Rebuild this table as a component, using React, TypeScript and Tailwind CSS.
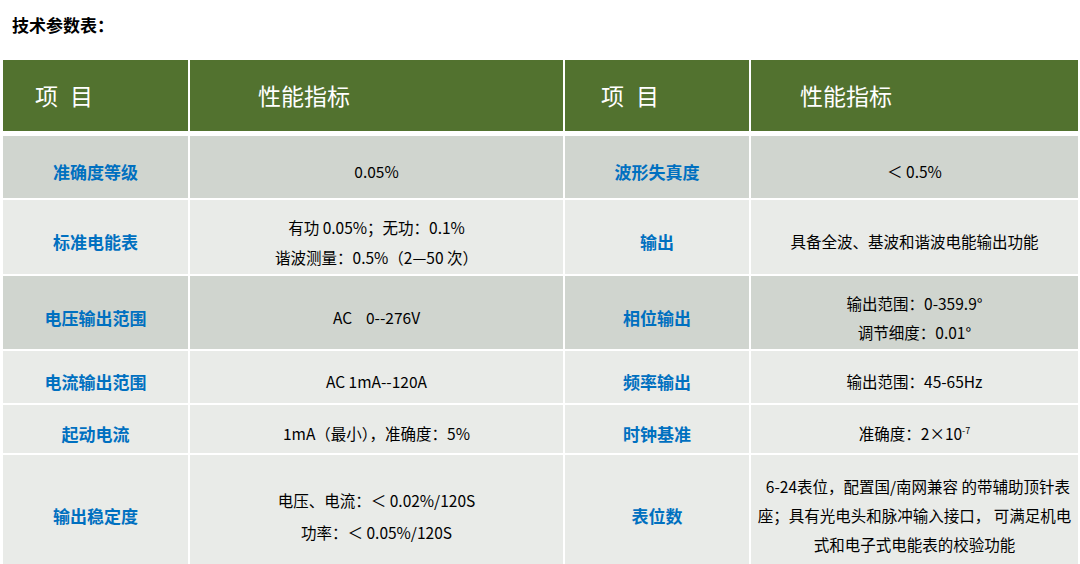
import React from "react";

type Row = {
  h: string;
  bg: string;
  label1: string;
  value1: React.ReactNode;
  label2: string;
  value2: React.ReactNode;
};

const dark = "bg-[#d0d5cf]";
const light = "bg-[#e9ebe8]";

const rows: Row[] = [
  {
    h: "h-[62px]",
    bg: dark,
    label1: "准确度等级",
    value1: "0.05%",
    label2: "波形失真度",
    value2: "＜ 0.5%",
  },
  {
    h: "h-[74px]",
    bg: light,
    label1: "标准电能表",
    value1: (
      <div className="leading-[30px]">
        <div>有功 0.05%；无功：0.1%</div>
        <div>谐波测量：0.5%（2—50 次）</div>
      </div>
    ),
    label2: "输出",
    value2: "具备全波、基波和谐波电能输出功能",
  },
  {
    h: "h-[73px]",
    bg: dark,
    label1: "电压输出范围",
    value1: <span className="whitespace-pre">AC    0--276V</span>,
    label2: "相位输出",
    value2: (
      <div className="leading-[29px]">
        <div>输出范围：0-359.9°</div>
        <div>调节细度：0.01°</div>
      </div>
    ),
  },
  {
    h: "h-[52px]",
    bg: light,
    label1: "电流输出范围",
    value1: <span className="whitespace-pre">AC 1mA--120A</span>,
    label2: "频率输出",
    value2: "输出范围：45-65Hz",
  },
  {
    h: "h-[48px]",
    bg: light,
    label1: "起动电流",
    value1: "1mA（最小），准确度：5%",
    label2: "时钟基准",
    value2: (
      <span>
        准确度：2×10<sup className="text-[9px] -top-[6px]">-7</sup>
      </span>
    ),
  },
  {
    h: "h-[111px]",
    bg: light,
    label1: "输出稳定度",
    value1: (
      <div className="leading-[32px]">
        <div>电压、电流：＜ 0.02%/120S</div>
        <div>功率：＜ 0.05%/120S</div>
      </div>
    ),
    label2: "表位数",
    value2: (
      <div className="leading-[29px] whitespace-pre">
        <div>{"  6-24表位，配置国/南网兼容 的带辅助顶针表"}</div>
        <div>座；具有光电头和脉冲输入接口， 可满足机电</div>
        <div>式和电子式电能表的校验功能</div>
      </div>
    ),
  },
];

const cols = "grid grid-cols-[185px_373px_184px_327px] gap-x-[2px]";

function Label({ text }: { text: string }) {
  return (
    <div className="flex items-center justify-center pt-[10px] text-[17px] font-bold text-[#0070c0]">
      {text}
    </div>
  );
}

function Value({ children }: { children: React.ReactNode }) {
  return (
    <div className="flex items-center justify-center pt-[10px] text-center text-[15.5px] text-black">
      {children}
    </div>
  );
}

export default function App() {
  return (
    <div className="min-h-[564px] bg-white font-['Noto_Sans_CJK_SC',sans-serif] text-black">
      <div className="pl-[12px] pt-[15px] text-[17px] font-bold leading-[20px]">技术参数表：</div>

      <div className="ml-[3px] mt-[25px] w-[1075px]">
        {/* header */}
        <div className={`${cols} h-[71px] bg-white text-[23px] text-white`}>
          <div className="flex items-center bg-[#52722f] pl-[32px]">
            <span>项</span>
            <span className="ml-[12px]">目</span>
          </div>
          <div className="flex items-center bg-[#52722f] pl-[68px]">性能指标</div>
          <div className="flex items-center bg-[#52722f] pl-[36px]">
            <span>项</span>
            <span className="ml-[12px]">目</span>
          </div>
          <div className="flex items-center bg-[#52722f] pl-[49px]">性能指标</div>
        </div>

        <div className="mt-[5px] flex flex-col gap-y-[2px]">
          {rows.map((r) => (
            <div key={r.label1} className={`${cols} ${r.h}`}>
              <div className={r.bg + " flex justify-center"}>
                <Label text={r.label1} />
              </div>
              <div className={r.bg + " flex justify-center"}>
                <Value>{r.value1}</Value>
              </div>
              <div className={r.bg + " flex justify-center"}>
                <Label text={r.label2} />
              </div>
              <div className={r.bg + " flex justify-center"}>
                <Value>{r.value2}</Value>
              </div>
            </div>
          ))}
        </div>
      </div>
    </div>
  );
}
